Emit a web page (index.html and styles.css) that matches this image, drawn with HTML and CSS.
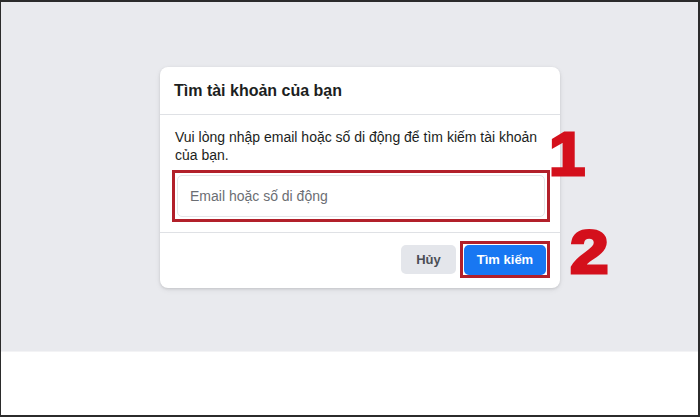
FILE: index.html
```html
<!DOCTYPE html>
<html lang="vi">
<head>
<meta charset="utf-8">
<title>Tìm tài khoản của bạn</title>
<link rel="stylesheet" href="styles.css">
</head>
<body>
<div class="frame">
  <div class="stage">
    <div class="card">
      <div class="card-header">
        <h2 class="card-title">Tìm tài khoản của bạn</h2>
      </div>
      <div class="card-body">
        <p class="card-text">Vui lòng nhập email hoặc số di động để tìm kiếm tài khoản của bạn.</p>
        <div class="mark-box mark-input">
          <div class="input">Email hoặc số di động</div>
        </div>
      </div>
      <div class="card-footer">
        <button class="btn btn-cancel">Hủy</button>
        <div class="mark-box mark-btn">
          <button class="btn btn-primary">Tìm kiếm</button>
        </div>
      </div>
    </div>
    <span class="num num-1">1</span>
    <span class="num num-2">2</span>
  </div>
  <div class="bottom"></div>
</div>
</body>
</html>
```

FILE: styles.css
```css
* { box-sizing: border-box; }
html, body { margin: 0; padding: 0; }
body {
  font-family: "Liberation Sans", Arial, sans-serif;
  background: #ffffff;
}
.frame {
  width: 700px;
  height: 417px;
  border: 2px solid #2b2b2b;
  border-left-width: 1px;
  display: flex;
  flex-direction: column;
  background: #ffffff;
}
.stage {
  position: relative;
  height: 350px;
  background: #e9eaee;
  padding-top: 65px;
  padding-left: 159px;
  border-bottom: 1px solid #f3f3f5;
}
.bottom { flex: 1; background: #ffffff; }

.card {
  width: 400px;
  background: #ffffff;
  border-radius: 8px;
  box-shadow: 0 1px 3px rgba(0,0,0,0.12), 0 2px 6px rgba(0,0,0,0.06);
}
.card-header {
  height: 48px;
  display: flex;
  align-items: center;
  padding: 0 14px;
  border-bottom: 1px solid #dfe1e5;
}
.card-title {
  margin: 0;
  font-size: 16px;
  font-weight: bold;
  color: #1c1e21;
}
.card-body {
  padding: 13px 10px 10px 12px;
  border-bottom: 1px solid #dfe1e5;
}
.card-text {
  margin: 0 0 6px 3px;
  font-size: 14px;
  line-height: 18px;
  color: #1c1e21;
}
.mark-box {
  border: 3px solid #b2202a;
}
.mark-input {
  padding: 2px;
  height: 52px;
}
.input {
  height: 100%;
  border: 1px solid #e4e6ea;
  border-radius: 5px;
  display: flex;
  align-items: center;
  padding-left: 12px;
  font-size: 14px;
  color: #6b6e73;
}
.card-footer {
  display: flex;
  justify-content: flex-end;
  align-items: center;
  gap: 4px;
  padding: 8px 10px 10px 0;
}
.btn {
  font-family: "Liberation Sans", Arial, sans-serif;
  font-weight: bold;
  font-size: 13px;
  border: none;
  border-radius: 5px;
  height: 29px;
  padding: 0;
}
.btn-cancel {
  width: 55px;
  background: #e4e6eb;
  color: #4b4f56;
}
.mark-btn {
  padding: 0 1px 0 1px;
  height: 37px;
  display: flex;
  align-items: center;
}
.btn-primary {
  width: 82px;
  height: 30px;
  background: #1877f2;
  color: #ffffff;
}
.num {
  position: absolute;
  font-family: "Liberation Sans", Arial, sans-serif;
  font-weight: bold;
  font-size: 62px;
  line-height: 62px;
  color: #d4101c;
  -webkit-text-stroke: 3px #d4101c;
  transform-origin: left top;
}
.num-1 { left: 548px; top: 121px; transform: scaleX(1.05); }
.num-2 { left: 569px; top: 219px; transform: scaleX(1.12); }
```
